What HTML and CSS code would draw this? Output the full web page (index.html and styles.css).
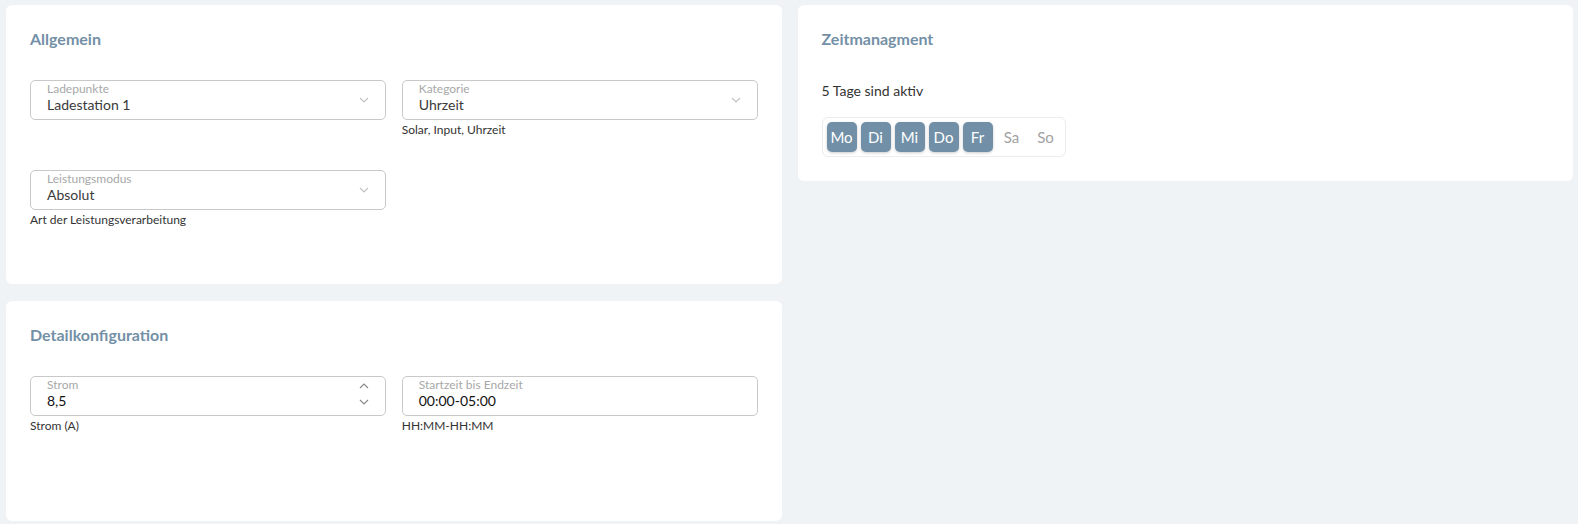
FILE: index.html
```html
<!DOCTYPE html>
<html lang="de">
<head>
    <meta charset="UTF-8">
    <meta name="viewport" content="width=device-width, initial-scale=1.0">
    <title>Regel bearbeiten</title>
    <link rel="stylesheet" href="styles.css">
</head>
<body>

<div class="page">
    <div class="column">
        <!-- Allgemein -->
        <div class="card">
            <h2 class="card-title">Allgemein</h2>
            <div class="fields">
                <div class="field">
                    <div class="field-box">
                        <span class="field-label">Ladepunkte</span>
                        <span class="field-value">Ladestation 1</span>
                        <svg class="chevron" viewBox="0 0 10 6"><path d="M1 1l4 4 4-4"/></svg>
                    </div>
                </div>
                <div class="field">
                    <div class="field-box">
                        <span class="field-label">Kategorie</span>
                        <span class="field-value">Uhrzeit</span>
                        <svg class="chevron" viewBox="0 0 10 6"><path d="M1 1l4 4 4-4"/></svg>
                    </div>
                    <div class="field-hint">Solar, Input, Uhrzeit</div>
                </div>
                <div class="field">
                    <div class="field-box">
                        <span class="field-label">Leistungsmodus</span>
                        <span class="field-value">Absolut</span>
                        <svg class="chevron" viewBox="0 0 10 6"><path d="M1 1l4 4 4-4"/></svg>
                    </div>
                    <div class="field-hint">Art der Leistungsverarbeitung</div>
                </div>
            </div>
        </div>

        <!-- Detailkonfiguration -->
        <div class="card card-fill">
            <h2 class="card-title">Detailkonfiguration</h2>
            <div class="fields">
                <div class="field">
                    <div class="field-box">
                        <span class="field-label">Strom</span>
                        <span class="field-value dark">8,5</span>
                        <div class="spinner">
                            <svg class="spin" viewBox="0 0 10 6"><path d="M1 5l4-4 4 4"/></svg>
                            <svg class="spin" viewBox="0 0 10 6"><path d="M1 1l4 4 4-4"/></svg>
                        </div>
                    </div>
                    <div class="field-hint">Strom (A)</div>
                </div>
                <div class="field">
                    <div class="field-box">
                        <span class="field-label">Startzeit bis Endzeit</span>
                        <span class="field-value dark">00:00-05:00</span>
                    </div>
                    <div class="field-hint">HH:MM-HH:MM</div>
                </div>
            </div>
        </div>
    </div>

    <div class="column">
        <!-- Zeitmanagment -->
        <div class="card">
            <h2 class="card-title">Zeitmanagment</h2>
            <p class="days-info">5 Tage sind aktiv</p>
            <div class="days">
                <button class="day active">Mo</button>
                <button class="day active">Di</button>
                <button class="day active">Mi</button>
                <button class="day active">Do</button>
                <button class="day active">Fr</button>
                <button class="day">Sa</button>
                <button class="day">So</button>
            </div>
        </div>
    </div>
</div>

</body>
</html>
```

FILE: styles.css
```css
* {
    box-sizing: border-box;
}

body {
    margin: 0;
    font-family: Lato, "Open Sans", sans-serif;
    background: #eff3f6;
    color: #333;
}

.page {
    display: grid;
    grid-template-columns: 1fr 1fr;
    column-gap: 16px;
    height: 100vh;
    padding: 5px 5px 3px 6px;
}

.column {
    display: flex;
    flex-direction: column;
    align-items: stretch;
    gap: 17px;
}

.card {
    background: #fff;
    border-radius: 6px;
    padding: 24px;
}

.card-fill {
    flex: 1;
}

.card-title {
    margin: 0 0 31px;
    font-size: 16px;
    line-height: 20px;
    font-weight: 700;
    color: #7390a6;
}

.fields {
    display: grid;
    grid-template-columns: 1fr 1fr;
    column-gap: 16px;
}

.field {
    height: 90px;
}

.field-box {
    position: relative;
    height: 40px;
    border: 1px solid #c9c9c9;
    border-radius: 5px;
    padding: 1px 40px 0 16px;
    display: flex;
    flex-direction: column;
}

.field-label {
    font-size: 12px;
    line-height: 14px;
    color: #a8a8a8;
}

.field-value {
    font-size: 14px;
    line-height: 17px;
    color: #3a3a3a;
}

.field-value.dark {
    color: #111;
}

.chevron {
    position: absolute;
    right: 16px;
    top: 16px;
    width: 10px;
    height: 6px;
    fill: none;
    stroke: #c2c2c2;
    stroke-width: 1.2;
}

.spinner {
    position: absolute;
    right: 16px;
    top: 6px;
    display: flex;
    flex-direction: column;
    gap: 10px;
}

.spin {
    width: 10px;
    height: 6px;
    fill: none;
    stroke: #8a8a8a;
    stroke-width: 1.2;
}

.field-hint {
    margin-top: 3px;
    font-size: 12px;
    line-height: 14px;
    color: #333;
}

.days-info {
    margin: 0 0 17px;
    padding-top: 2px;
    font-size: 14px;
    line-height: 18px;
    color: #333;
}

.days {
    display: inline-flex;
    gap: 4px;
    padding: 4px;
    border: 1px solid #ececec;
    border-radius: 6px;
}

.day {
    width: 30px;
    height: 30px;
    padding: 0;
    border: none;
    border-radius: 5px;
    background: transparent;
    font-family: inherit;
    font-size: 15px;
    color: #a2a2a2;
}

.day.active {
    background: #7190a7;
    color: #fff;
    box-shadow: 0 1px 3px rgba(0, 0, 0, 0.2);
}
```
